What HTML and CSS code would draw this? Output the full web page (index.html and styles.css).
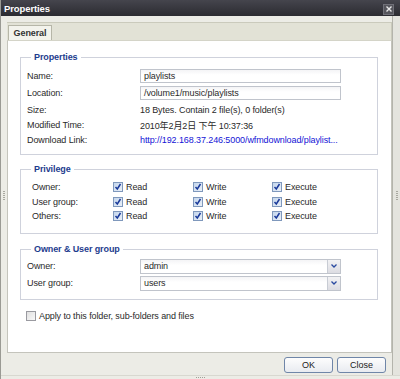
FILE: index.html
```html
<!DOCTYPE html>
<html lang="en">

<head>
    <meta charset="utf-8">
    <meta name="viewport" content="width=device-width, initial-scale=1.0">
    <title>Properties</title>
    <link rel="stylesheet" href="styles.css">
</head>

<body>
    <div class="window">
        <div class="titlebar">
            <span class="title">Properties</span>
            <span class="close">
                <svg width="8" height="8" viewBox="0 0 8 8">
                    <path d="M1.5 1.5 L6.5 6.5 M6.5 1.5 L1.5 6.5" stroke="#e8e8e8" stroke-width="1.4" />
                </svg>
            </span>
        </div>

        <div class="frame">
            <div class="grip grip-left"></div>
            <div class="main">
                <div class="tabs">
                    <div class="tab">General</div>
                </div>

                <div class="panel">
                    <!-- properties -->
                    <fieldset class="group props">
                        <legend>Properties</legend>
                        <div class="row">
                            <span class="lbl">Name:</span>
                            <div class="field">playlists</div>
                        </div>
                        <div class="row">
                            <span class="lbl">Location:</span>
                            <div class="field">/volume1/music/playlists</div>
                        </div>
                        <div class="row text">
                            <span class="lbl">Size:</span>
                            <span>18 Bytes. Contain 2 file(s), 0 folder(s)</span>
                        </div>
                        <div class="row text">
                            <span class="lbl">Modified Time:</span>
                            <span>2010年2月2日 下午 10:37:36</span>
                        </div>
                        <div class="row text">
                            <span class="lbl">Download Link:</span>
                            <a href="#" class="link">http://192.168.37.246:5000/wfmdownload/playlist...</a>
                        </div>
                    </fieldset>

                    <!-- privilege -->
                    <fieldset class="group priv">
                        <legend>Privilege</legend>
                        <div class="prow">
                            <span class="lbl">Owner:</span>
                            <span class="chk"><span class="cb on"></span>Read</span>
                            <span class="chk"><span class="cb on"></span>Write</span>
                            <span class="chk"><span class="cb on"></span>Execute</span>
                        </div>
                        <div class="prow">
                            <span class="lbl">User group:</span>
                            <span class="chk"><span class="cb on"></span>Read</span>
                            <span class="chk"><span class="cb on"></span>Write</span>
                            <span class="chk"><span class="cb on"></span>Execute</span>
                        </div>
                        <div class="prow">
                            <span class="lbl">Others:</span>
                            <span class="chk"><span class="cb on"></span>Read</span>
                            <span class="chk"><span class="cb on"></span>Write</span>
                            <span class="chk"><span class="cb on"></span>Execute</span>
                        </div>
                    </fieldset>

                    <!-- owner & user group -->
                    <fieldset class="group owners">
                        <legend>Owner &amp; User group</legend>
                        <div class="row">
                            <span class="lbl">Owner:</span>
                            <div class="combo"><span>admin</span><span class="arrow"></span></div>
                        </div>
                        <div class="row">
                            <span class="lbl">User group:</span>
                            <div class="combo"><span>users</span><span class="arrow"></span></div>
                        </div>
                    </fieldset>

                    <div class="apply"><span class="cb"></span>Apply to this folder, sub-folders and files</div>
                </div>

                <div class="buttons">
                    <button class="btn">OK</button>
                    <button class="btn">Close</button>
                </div>
            </div>
            <div class="grip grip-right"></div>
        </div>
        <div class="bottom"><span class="dots"></span></div>
    </div>
</body>

</html>
```

FILE: styles.css
```css
body {
    margin: 0;
    font-family: "Liberation Sans", Arial, "Noto Sans CJK SC", sans-serif;
    font-size: 9px;
    letter-spacing: -0.1px;
    color: #2a2a2a;
}

.window {
    width: 400px;
    height: 379px;
    background-color: #ecece6;
    display: flex;
    flex-direction: column;
    box-sizing: border-box;
    border-left: 1px solid #9a9a94;
}

/***************titlebar**************/
.titlebar {
    height: 16px;
    background: linear-gradient(#45454d, #2b2b31);
    display: flex;
    align-items: center;
    justify-content: space-between;
    padding: 0 6px 0 3px;
}

.title {
    color: #fff;
    font-weight: bold;
    font-size: 9.5px;
}

.close {
    width: 9px;
    height: 9px;
    background-color: #55555c;
    border: 1px solid #707078;
    display: flex;
    align-items: center;
    justify-content: center;
    margin-top: 2px;
}

/***************frame**************/
.frame {
    flex: 1;
    display: flex;
}

.grip {
    width: 7px;
    display: flex;
    align-items: center;
    justify-content: center;
}

.grip-left {
    width: 6px;
}

.grip::after {
    content: "";
    width: 2px;
    height: 10px;
    background: repeating-linear-gradient(#a8a8a0 0 1px, transparent 1px 2px);
}

.grip-right {
    border-left: 1px solid #b4b4ac;
    background-color: #e4e4de;
}

.main {
    flex: 1;
    display: flex;
    flex-direction: column;
    padding-top: 6px;
}

.tabs {
    height: 18px;
    background-color: #e2e2d6;
    border-top: 1px solid #cacabc;
    border-right: 1px solid #cacabc;
    box-sizing: border-box;
    display: flex;
    align-items: flex-end;
    padding-left: 1px;
}

.tab {
    height: 15px;
    width: 44px;
    box-sizing: border-box;
    background-color: #f3f3ec;
    border: 1px solid #b6b6a8;
    border-bottom: none;
    font-weight: bold;
    display: flex;
    align-items: center;
    justify-content: center;
    color: #333;
}

.panel {
    height: 313px;
    box-sizing: border-box;
    background-color: #fff;
    border: 1px solid #c4c4bc;
    border-top-color: #d4d4c8;
    padding: 11px 13px 0 12px;
}

/***************groups**************/
.group {
    margin: 0;
    padding: 0 6px;
    border: 1px solid #cfd2dc;
}

.group legend {
    margin-left: 4px;
    padding: 0 3px;
    color: #1d3c8e;
    font-weight: bold;
    line-height: 11px;
}

.props {
    padding-top: 6px;
    padding-bottom: 7px;
}

.row {
    display: grid;
    grid-template-columns: 113px 201px;
    align-items: center;
    margin-bottom: 3px;
}

.row.text {
    height: 14px;
    margin-bottom: 1px;
}

.row.text:last-child {
    margin-bottom: 0;
}

.field,
.combo {
    height: 14px;
    box-sizing: border-box;
    border: 1px solid #c0c4cc;
    background: linear-gradient(#f4f4f6, #fff 40%);
    padding-left: 3px;
    display: flex;
    align-items: center;
}

.link {
    color: #1414d6;
    text-decoration: none;
    white-space: nowrap;
}

.priv {
    margin-top: 9px;
    padding-top: 5px;
    padding-bottom: 9px;
}

.prow {
    display: grid;
    grid-template-columns: 81px 80px 79px 1fr;
    padding-left: 5px;
    line-height: 14.5px;
}

.chk {
    display: flex;
    align-items: center;
}

.cb {
    width: 8px;
    height: 8px;
    border: 1px solid #8aa0bc;
    background: linear-gradient(135deg, #dfe8f2, #f6f8fb);
    margin-right: 3px;
    display: inline-block;
    flex-shrink: 0;
}

.cb.on {
    background: url("data:image/svg+xml,%3Csvg xmlns='http://www.w3.org/2000/svg' width='8' height='8'%3E%3Cpath d='M1.5 4 L3.3 6 L6.5 1' fill='none' stroke='%231a3a9a' stroke-width='1.5'/%3E%3C/svg%3E") no-repeat center, linear-gradient(135deg, #c4d6ec, #eaf0f8);
    border-color: #7f98bc;
}

.owners {
    margin-top: 10px;
    padding-top: 4px;
    padding-bottom: 8px;
}

.owners .row {
    margin-bottom: 2px;
}

.owners .row:last-child {
    margin-bottom: 0;
}

.combo {
    height: 15px;
    justify-content: space-between;
    padding-right: 0;
}

.arrow {
    width: 12px;
    height: 13px;
    border-left: 1px solid #c8ccd4;
    background: url("data:image/svg+xml,%3Csvg xmlns='http://www.w3.org/2000/svg' width='6' height='4'%3E%3Cpath d='M0.5 0.5 L3 3 L5.5 0.5' fill='none' stroke='%232a4aa0' stroke-width='1.3'/%3E%3C/svg%3E") no-repeat center, linear-gradient(#f2f2f4, #dcdce2);
}

.apply {
    display: flex;
    align-items: center;
    margin-top: 11px;
    padding-left: 6px;
}

.apply .cb {
    background: linear-gradient(135deg, #e0e0e0, #f8f8f8);
    border-color: #9a9aa0;
}

/***************buttons**************/
.buttons {
    display: flex;
    justify-content: flex-end;
    gap: 4px;
    padding: 4px 6px 0 0;
}

.btn {
    width: 49px;
    height: 16px;
    padding: 0;
    font-family: inherit;
    font-size: 9px;
    color: #222;
    border: 1px solid #6f86a8;
    border-radius: 3px;
    background: linear-gradient(#fdfdfd, #e8ebf0);
}

.bottom {
    height: 3px;
    display: flex;
    justify-content: center;
    border-top: 1px solid #d8d8d0;
}

.dots {
    width: 10px;
    height: 1px;
    margin-top: 1px;
    background: repeating-linear-gradient(90deg, #a0a098 0 1px, transparent 1px 2px);
}
```
